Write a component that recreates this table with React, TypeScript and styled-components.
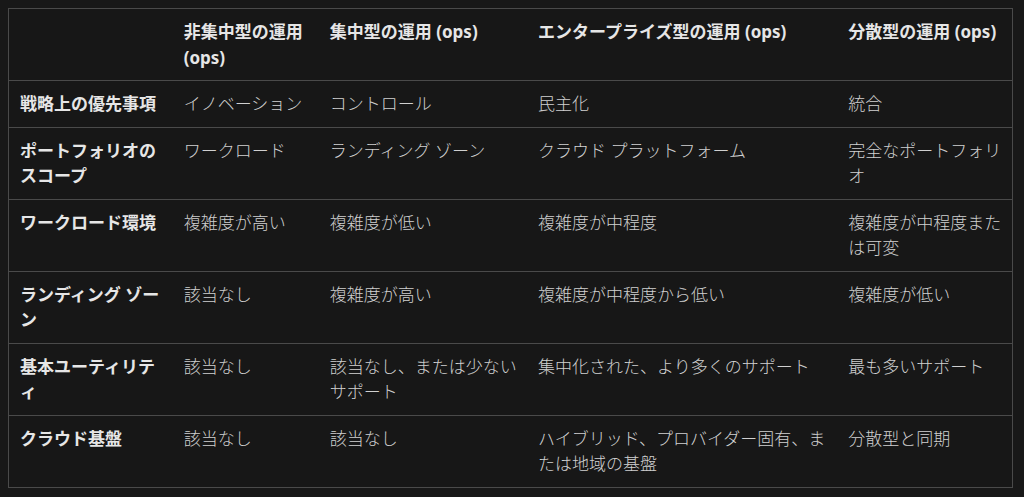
import React from 'react';
import styled, { createGlobalStyle } from 'styled-components';

type Row = {
  label: string;
  cells: string[];
};

const headers = [
  '',
  '非集中型の運用 (ops)',
  '集中型の運用 (ops)',
  'エンタープライズ型の運用 (ops)',
  '分散型の運用 (ops)',
];

const rows: Row[] = [
  { label: '戦略上の優先事項', cells: ['イノベーション', 'コントロール', '民主化', '統合'] },
  { label: 'ポートフォリオのスコープ', cells: ['ワークロード', 'ランディング ゾーン', 'クラウド プラットフォーム', '完全なポートフォリオ'] },
  { label: 'ワークロード環境', cells: ['複雑度が高い', '複雑度が低い', '複雑度が中程度', '複雑度が中程度または可変'] },
  { label: 'ランディング ゾーン', cells: ['該当なし', '複雑度が高い', '複雑度が中程度から低い', '複雑度が低い'] },
  { label: '基本ユーティリティ', cells: ['該当なし', '該当なし、または少ないサポート', '集中化された、より多くのサポート', '最も多いサポート'] },
  { label: 'クラウド基盤', cells: ['該当なし', '該当なし', 'ハイブリッド、プロバイダー固有、または地域の基盤', '分散型と同期'] },
];

const columnWidths = [164, 146, 208, 310, 175];

const GlobalStyle = createGlobalStyle`
  body {
    margin: 8px;
    background: #181818;
    font-family: "Noto Sans", "Noto Sans CJK JP", sans-serif;
  }
`;

const App: React.FC = () => {
  return (
    <>
      <GlobalStyle />
      <Table>
        <colgroup>
          {columnWidths.map((w, i) => (
            <col key={i} style={{ width: w }} />
          ))}
        </colgroup>
        <thead>
          <tr>
            {headers.map((h, i) => (
              <HeadCell key={i}>{h}</HeadCell>
            ))}
          </tr>
        </thead>
        <tbody>
          {rows.map((row) => (
            <BodyRow key={row.label}>
              <LabelCell>{row.label}</LabelCell>
              {row.cells.map((c, i) => (
                <Cell key={i}>{c}</Cell>
              ))}
            </BodyRow>
          ))}
        </tbody>
      </Table>
    </>
  );
};

const Table = styled.table`
  width: 1005px;
  table-layout: fixed;
  border-collapse: collapse;
  border: 1px solid #4a4a4a;
  background: #171717;
  font-size: 17px;
  line-height: 25.5px;
`;

const BodyRow = styled.tr`
  border-top: 1px solid #4a4a4a;
`;

const HeadCell = styled.th`
  padding: 10px 4px 10px 11px;
  text-align: left;
  vertical-align: top;
  font-weight: 700;
  color: #e6e6e6;
`;

const LabelCell = styled.td`
  padding: 10px 4px 10px 11px;
  vertical-align: top;
  font-weight: 700;
  color: #e6e6e6;
`;

const Cell = styled.td`
  padding: 10px 4px 10px 11px;
  vertical-align: top;
  font-weight: 300;
  color: #d0d0d0;
`;

export default App;
